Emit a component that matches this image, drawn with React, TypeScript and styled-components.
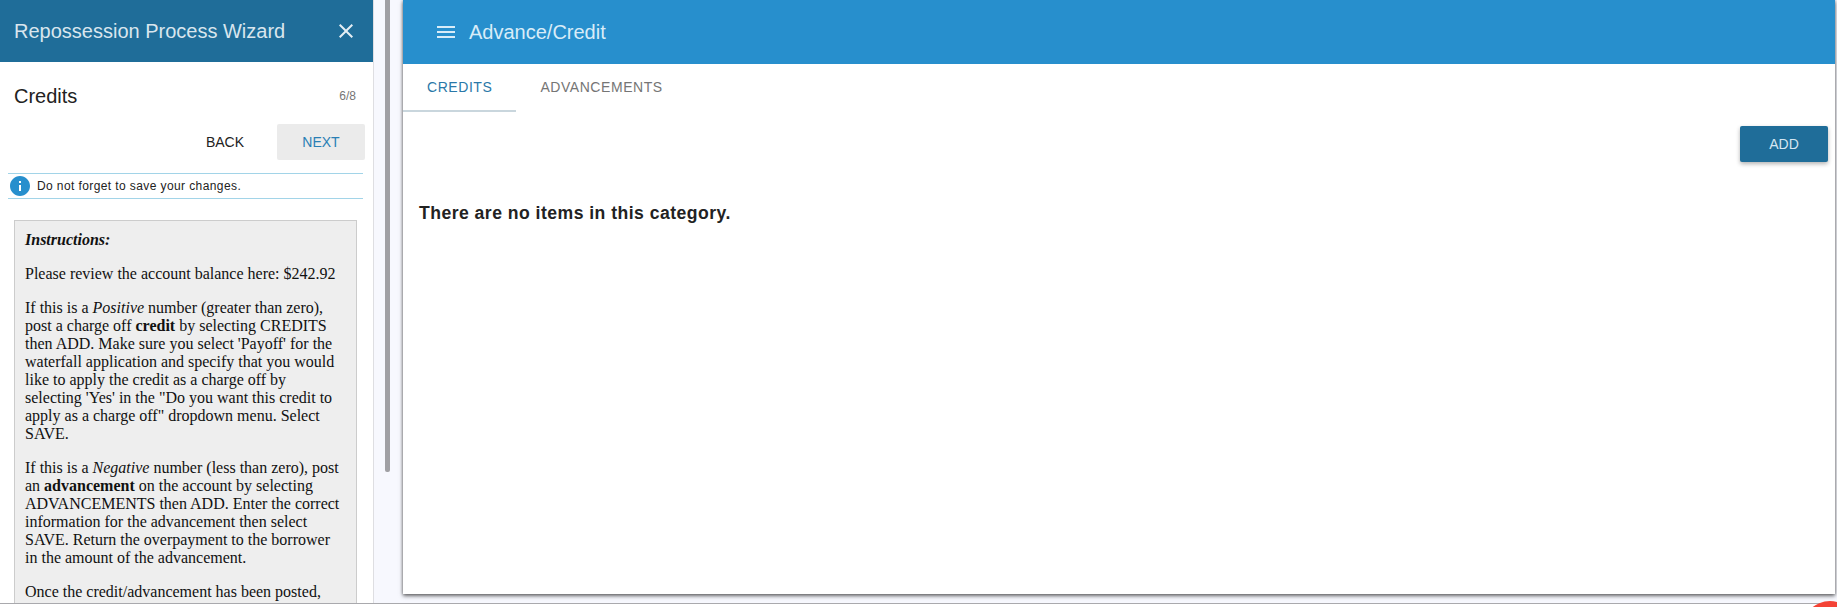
import styled, { createGlobalStyle } from 'styled-components';

const GlobalStyle = createGlobalStyle`
  html, body {
    margin: 0;
    padding: 0;
    height: 100%;
    overflow: hidden;
    background: #fff;
    font-family: "Liberation Sans", Arial, sans-serif;
  }
  * { box-sizing: border-box; }
`;

const Page = styled.div`
  position: relative;
  width: 1837px;
  height: 607px;
  overflow: hidden;
  background: #fff;
`;

const Workspace = styled.div`
  display: flex;
  height: 604px;
  background: #f7f8fe;
  border-bottom: 1px solid #a9a9ad;
`;

const Wizard = styled.aside`
  flex: 0 0 374px;
  height: 100%;
  overflow: hidden;
  background: #fff;
  border-right: 1px solid #dedee2;
`;

const WizardHeader = styled.header`
  display: flex;
  align-items: center;
  justify-content: space-between;
  height: 62px;
  padding: 0 15px 0 14px;
  background: #1f6d99;
  color: #d9e6ee;
  font-size: 20px;
`;

const IconButton = styled.span`
  display: flex;
  color: #e4eef4;
`;

const StepRow = styled.div`
  display: flex;
  align-items: center;
  justify-content: space-between;
  height: 68px;
  padding: 0 17px 0 14px;
`;

const StepTitle = styled.h2`
  margin: 0;
  font-size: 20px;
  font-weight: 400;
  color: #222;
`;

const StepCount = styled.span`
  font-size: 12px;
  color: #757575;
`;

const ButtonRow = styled.div`
  display: flex;
  justify-content: flex-end;
  gap: 8px;
  padding-right: 8px;
  margin-top: -6px;
`;

const WizardButton = styled.button<{ $active?: boolean }>`
  width: 88px;
  height: 36px;
  border: 0;
  border-radius: 2px;
  font: 400 14px "Liberation Sans", Arial, sans-serif;
  background: ${(p) => (p.$active ? '#ebebeb' : 'transparent')};
  color: ${(p) => (p.$active ? '#2a7fb5' : '#222')};
`;

const Notice = styled.div`
  display: flex;
  align-items: center;
  gap: 5px;
  height: 26px;
  margin: 13px 10px 0 8px;
  border-top: 1px solid #a2d4e8;
  border-bottom: 1px solid #a2d4e8;
  font-size: 12px;
  letter-spacing: 0.4px;
  color: #222;
`;

const NoticeIcon = styled.svg`
  width: 24px;
  height: 24px;
  flex: none;
  fill: #278fcd;
`;

const Instructions = styled.section`
  margin: 21px 16px 0 14px;
  padding: 10px;
  background: #eee;
  border: 1px solid #ccc;
  font-family: "Liberation Serif", serif;
  font-size: 16px;
  line-height: 18px;
  color: #111;

  p {
    margin: 0 0 16px;
  }
`;

const Gutter = styled.div`
  flex: 0 0 29px;
  padding-left: 11px;
`;

const ScrollThumb = styled.div`
  width: 5px;
  height: 472px;
  background: #a0a0a4;
  border-radius: 0 0 2px 2px;
`;

const Card = styled.main`
  flex: 1;
  height: 594px;
  margin-right: 2px;
  background: #fff;
  box-shadow: 0 2px 4px rgba(0, 0, 0, 0.55), 0 0 3px rgba(0, 0, 0, 0.3);
`;

const CardHeader = styled.header`
  display: flex;
  align-items: center;
  gap: 11px;
  height: 64px;
  padding-left: 31px;
  background: #278fcd;
  color: #d8ecf8;
  font-size: 20px;
`;

const Tabs = styled.nav`
  display: flex;
  height: 48px;
`;

const Tab = styled.div<{ $active?: boolean }>`
  display: flex;
  align-items: center;
  justify-content: center;
  padding: 0 24px;
  font-size: 14px;
  letter-spacing: 0.56px;
  color: ${(p) => (p.$active ? '#2a78a8' : '#757575')};
  border-bottom: 2px solid ${(p) => (p.$active ? '#c9d6dd' : 'transparent')};
`;

const ActionRow = styled.div`
  display: flex;
  justify-content: flex-end;
  padding: 14px 7px 0 0;
`;

const AddButton = styled.button`
  width: 88px;
  height: 36px;
  border: 0;
  border-radius: 2px;
  background: #1f6d99;
  color: #d5e6f2;
  font: 400 14px "Liberation Sans", Arial, sans-serif;
  box-shadow: 0 2px 4px rgba(0, 0, 0, 0.3);
`;

const EmptyMessage = styled.p`
  margin: 41px 0 0 16px;
  font-family: "Liberation Sans", sans-serif;
  font-size: 17.6px;
  font-weight: 700;
  letter-spacing: 0.47px;
  color: #222;
`;

const Fab = styled.div`
  position: absolute;
  top: 601px;
  right: -21px;
  width: 56px;
  height: 56px;
  border-radius: 50%;
  background: #f44336;
`;

const MuiIcon = ({ d, size = 24 }: { d: string; size?: number }) => (
  <svg width={size} height={size} viewBox="0 0 24 24" fill="currentColor">
    <path d={d} />
  </svg>
);

const CLOSE = 'M19 6.41 17.59 5 12 10.59 6.41 5 5 6.41 10.59 12 5 17.59 6.41 19 12 13.41 17.59 19 19 17.59 13.41 12z';
const MENU = 'M3 18h18v-2H3v2zm0-5h18v-2H3v2zm0-7v2h18V6H3z';
const INFO = 'M12 2C6.48 2 2 6.48 2 12s4.48 10 10 10 10-4.48 10-10S17.52 2 12 2zm1 15h-2v-6h2v6zm0-8h-2V7h2v2z';

export default function App() {
  return (
    <Page>
      <GlobalStyle />
      <Workspace>
        <Wizard>
          <WizardHeader>
            Repossession Process Wizard
            <IconButton>
              <MuiIcon d={CLOSE} />
            </IconButton>
          </WizardHeader>
          <StepRow>
            <StepTitle>Credits</StepTitle>
            <StepCount>6/8</StepCount>
          </StepRow>
          <ButtonRow>
            <WizardButton>BACK</WizardButton>
            <WizardButton $active>NEXT</WizardButton>
          </ButtonRow>
          <Notice>
            <NoticeIcon viewBox="0 0 24 24">
              <path d={INFO} />
            </NoticeIcon>
            Do not forget to save your changes.
          </Notice>
          <Instructions>
            <p>
              <b>
                <i>Instructions:</i>
              </b>
            </p>
            <p>Please review the account balance here: $242.92</p>
            <p>
              If this is a <i>Positive</i> number (greater than zero), post a charge off <b>credit</b> by
              selecting CREDITS then ADD. Make sure you select 'Payoff' for the waterfall application and
              specify that you would like to apply the credit as a charge off by selecting 'Yes' in the
              "Do you want this credit to apply as a charge off" dropdown menu. Select SAVE.
            </p>
            <p>
              If this is a <i>Negative</i> number (less than zero), post an <b>advancement</b> on the account
              by selecting ADVANCEMENTS then ADD. Enter the correct information for the advancement then
              select SAVE. Return the overpayment to the borrower in the amount of the advancement.
            </p>
            <p>Once the credit/advancement has been posted, select NEXT to continue to the next step.</p>
          </Instructions>
        </Wizard>
        <Gutter>
          <ScrollThumb />
        </Gutter>
        <Card>
          <CardHeader>
            <MuiIcon d={MENU} />
            Advance/Credit
          </CardHeader>
          <Tabs>
            <Tab $active>CREDITS</Tab>
            <Tab>ADVANCEMENTS</Tab>
          </Tabs>
          <ActionRow>
            <AddButton>ADD</AddButton>
          </ActionRow>
          <EmptyMessage>There are no items in this category.</EmptyMessage>
        </Card>
      </Workspace>
      <Fab />
    </Page>
  );
}
